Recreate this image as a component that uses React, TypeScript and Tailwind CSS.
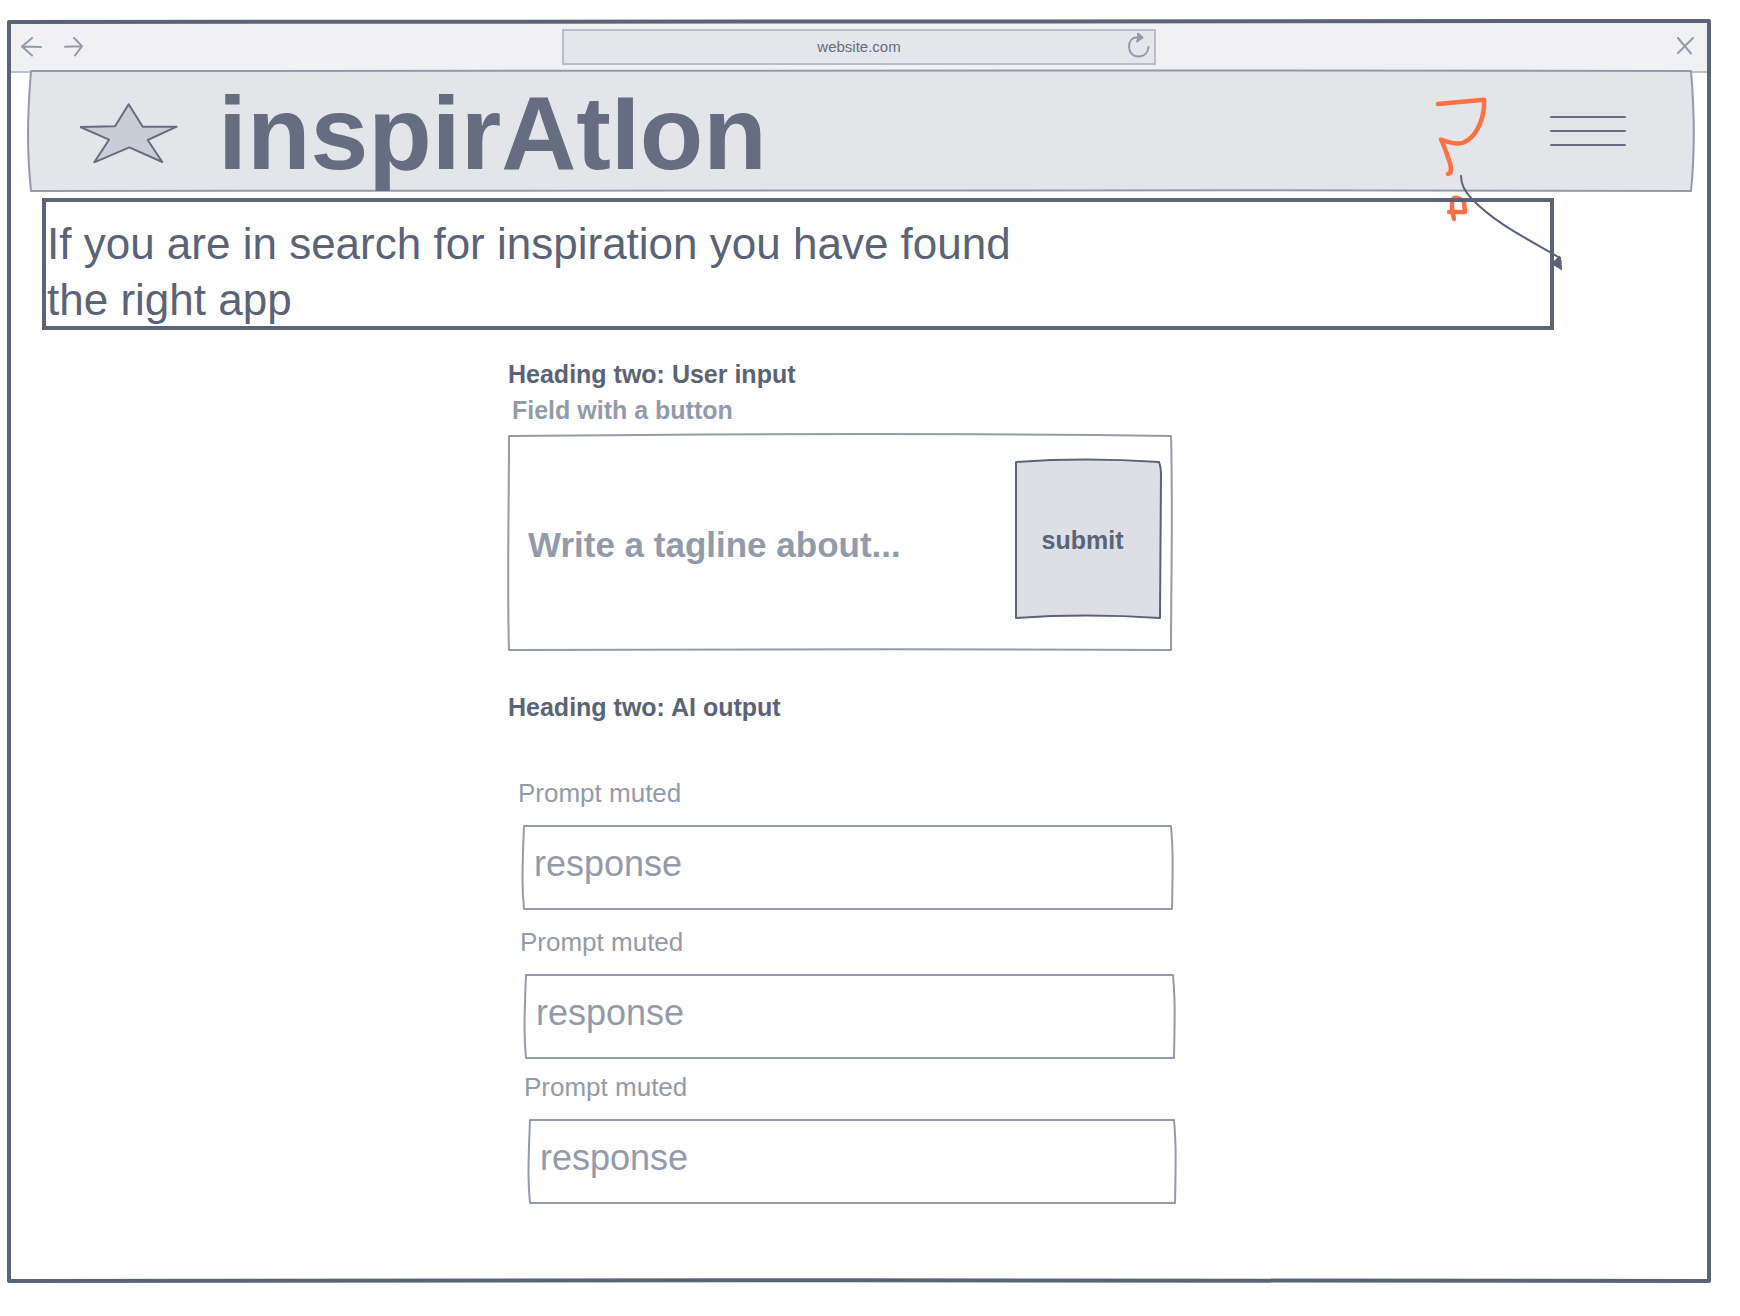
import type { ReactNode } from "react";

type SketchProps = {
  viewBox: string;
  d: string;
  className: string;
};

/* Hand-drawn outline that stretches with the box it decorates. */
function Sketch({ viewBox, d, className }: SketchProps) {
  return (
    <svg
      aria-hidden="true"
      viewBox={viewBox}
      preserveAspectRatio="none"
      className={`pointer-events-none absolute inset-0 h-full w-full overflow-visible ${className}`}
    >
      <path d={d} vectorEffect="non-scaling-stroke" strokeLinejoin="round" />
    </svg>
  );
}

function BrowserBar() {
  return (
    <div className="grid h-[50px] grid-cols-[1fr_35%_1fr] items-center border-b-2 border-[#bcc2cc] bg-[#f1f1f3] text-[#939bab]">
      <div className="flex items-center gap-[18px] pl-[10px]">
        <button type="button" aria-label="Back">
          <svg width="24" height="20" viewBox="0 0 24 20" fill="none" stroke="currentColor" strokeWidth="2" strokeLinecap="round" strokeLinejoin="round">
            <path d="M21 10 L2 9.500 M12 1 L2 9.500 L12 18.500" />
          </svg>
        </button>
        <button type="button" aria-label="Forward">
          <svg width="24" height="20" viewBox="0 0 24 20" fill="none" stroke="currentColor" strokeWidth="2" strokeLinecap="round" strokeLinejoin="round">
            <path d="M3 9.800 L20 9.200 M12 1 L20 9.200 L13 18.500" />
          </svg>
        </button>
      </div>
      <div className="relative flex h-9 items-center justify-center border-2 border-[#b8bec9] bg-[#e4e6ea]">
        <span className="text-[15px] leading-5 text-[#666d80]">website.com</span>
        <button type="button" aria-label="Reload" className="absolute right-1">
          <svg width="22" height="28" viewBox="0 0 22 28" fill="none" stroke="currentColor" strokeWidth="2" strokeLinecap="round" strokeLinejoin="round">
            <path d="M20.500 14 C20 20 16 23.500 10.500 23.500 C4.500 23.500 1 19 1 14 C1 8 4.500 4.500 9 4.300 L14 4.500" />
            <path d="M10 0.500 L14.500 4.500 L9 8.500 L10.500 4.500 Z" fill="currentColor" />
          </svg>
        </button>
      </div>
      <button type="button" aria-label="Close" className="mr-[11px] justify-self-end">
        <svg width="24" height="20" viewBox="0 0 24 20" fill="none" stroke="currentColor" strokeWidth="2" strokeLinecap="round">
          <path d="M5 1 L18 16.500 M20 1 L5 16" />
        </svg>
      </button>
    </div>
  );
}

/* Reviewer's pen marks over the header corner. */
function PenMarks() {
  return (
    <svg
      aria-hidden="true"
      width="140"
      height="185"
      viewBox="0 0 140 185"
      fill="none"
      strokeLinecap="round"
      strokeLinejoin="round"
      className="pointer-events-none absolute top-5 right-[124px]"
    >
      <g stroke="#ff7043" strokeWidth="4.500">
        <path d="M8 14 L54 9.800 C55 26 48 43 38 50 C31 55.500 23 54 11 49.500 C15 57 17 65 20 73 C21.500 79 22 83 18 84" />
        <path d="M24 129 C22 122 21 114 23 109 C26 106 32 109 34 112 L35 122 L19 122" />
      </g>
      <path d="M31 86 C31 96 37 104 42 109 C64 132 92 146 130 168" stroke="#5b6377" strokeWidth="2" />
      <path d="M122 173 L127 168 L130 165.500 L131.500 171 L132 180.500 L124 175.500 Z" fill="#5b6377" />
    </svg>
  );
}

function Header() {
  return (
    <header className="relative -mt-[3px] mr-[14px] ml-[18px] flex h-[122px] items-center pr-[68px] pl-[52px]">
      <Sketch
        viewBox="0 0 1666 122"
        d="M3 1 C500 0 1100 0 1663 1 C1667 48 1667 82 1663 121 C1100 120 500 119 3 121 C-1 82 -1 50 3 1 Z"
        className="fill-[#e3e5e9] stroke-[#939bab] stroke-2"
      />
      <svg aria-hidden="true" width="98" height="60" viewBox="0 0 98 60" className="relative mt-1 shrink-0">
        <path
          d="M48.700 1.300 L62.700 23.700 L96.700 23.700 L67.700 37 L82.300 59 L49.300 44.300 L14.300 59.300 L29 36.700 L0.300 24 L35 23.300 Z"
          fill="#c9cdd6"
          stroke="#666d80"
          strokeWidth="2"
          strokeLinejoin="round"
        />
      </svg>
      <h1 className="relative ml-10 pt-1 text-[104px] leading-[120px] font-bold text-[#666d80]">inspirAtIon</h1>
      <button type="button" aria-label="Menu" className="relative ml-auto">
        <svg width="76" height="32" viewBox="0 0 76 32" stroke="#666d80" strokeWidth="2" strokeLinecap="round">
          <path d="M1 2 H75 M1 16 H75 M1 30 H75" />
        </svg>
      </button>
      <PenMarks />
    </header>
  );
}

type ResponseProps = { id: string; offset: string };

function PromptResponse({ id, offset }: ResponseProps) {
  return (
    <div className={offset}>
      <label htmlFor={id} className="block text-[26px] leading-8">
        Prompt muted
      </label>
      <div className="relative mt-4 ml-1 w-[651px] max-w-full">
        <Sketch
          viewBox="0 0 650 85"
          d="M2 1 H648 C650 25 650 35 649 84 H2 C0 65 0 50 2 1 Z"
          className="fill-none stroke-[#939bab] stroke-2"
        />
        <input
          id={id}
          readOnly
          value="response"
          className="relative block h-[85px] w-full bg-transparent px-3 pb-2 text-4xl outline-none"
        />
      </div>
    </div>
  );
}

function Heading({ children }: { children: ReactNode }) {
  return <h2 className="text-[25px] leading-8 font-bold text-[#5b6377]">{children}</h2>;
}

export default function App() {
  return (
    <div className="bg-white pt-[19px] pr-7 pb-[33px] pl-[6px] font-['Liberation_Sans',sans-serif] text-[#939bab]">
      <div className="relative p-1 pb-[79px]">
        <Sketch
          viewBox="0 0 1706 1264"
          d="M3 3 C500 1 1100 1 1703 2 C1706 420 1706 840 1703 1262 C1100 1261 600 1261 3 1262 C0 840 0 420 3 3 Z"
          className="z-10 fill-none stroke-[#5b6377] stroke-4"
        />
        <BrowserBar />
        <Header />
        <p className="relative mt-[6px] mr-[154px] ml-8 h-[132px] border-4 border-[#5b6377] pt-[14px] pl-px text-[44px] leading-[56px] text-[#5b6377]">
          If you are in search for inspiration you have found
          <br />
          the right app
        </p>
        <main className="mx-auto mt-7 w-[702px] max-w-full pr-[38px]">
          <Heading>Heading two: User input</Heading>
          <form onSubmit={(e) => e.preventDefault()}>
            <label htmlFor="tagline" className="mt-1 ml-1 block text-[25px] leading-8 font-bold">
              Field with a button
            </label>
            <div className="relative mt-2 flex items-center gap-4 pt-[25px] pr-[10px] pb-8 pl-5">
              <Sketch
                viewBox="0 0 664 218"
                d="M1 2 C200 0 450 -1 663 2 C665 80 663 150 663 217 C450 216 200 216 1 217 C-1 150 1 80 1 2 Z"
                className="fill-none stroke-[#939bab] stroke-2"
              />
              <input
                id="tagline"
                placeholder="Write a tagline about..."
                className="relative min-w-0 flex-1 bg-transparent pt-3 text-[35px] leading-[44px] font-bold outline-none placeholder:text-[#939bab] placeholder:opacity-100"
              />
              <button type="submit" className="relative h-[160px] w-[147px] pt-1 pr-3 text-[25px] font-bold text-[#5b6377]">
                <Sketch
                  viewBox="0 0 146 160"
                  d="M1 3 Q70 -2 143 3 Q145 8 145 16 L144 159 Q70 154 1 159 Z"
                  className="fill-[#dedfe4] stroke-[#5b6377] stroke-2"
                />
                <span className="relative">submit</span>
              </button>
            </div>
          </form>
          <div className="mt-10">
            <Heading>Heading two: AI output</Heading>
          </div>
          <div className="mt-[54px]">
            <PromptResponse id="response-1" offset="ml-[10px]" />
            <PromptResponse id="response-2" offset="mt-4 ml-3" />
            <PromptResponse id="response-3" offset="mt-3 ml-4" />
          </div>
        </main>
      </div>
    </div>
  );
}
